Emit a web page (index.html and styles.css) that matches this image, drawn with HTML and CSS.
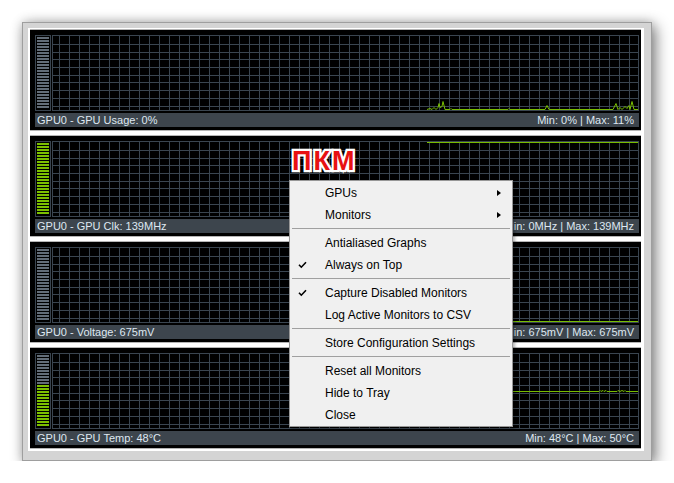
FILE: index.html
```html
<!DOCTYPE html>
<html>
<head>
<meta charset="utf-8">
<link rel="stylesheet" href="styles.css">
</head>
<body>
<div class="window">
  <div class="inner">
    <section class="panel">
      <div class="graph-row">
        <div class="meter"><div class="stripes"></div></div>
        <div class="graph">
          <svg class="plot" xmlns="http://www.w3.org/2000/svg">
            <path class="hgrid" d="M0 8.5H585M0 16.5H585M0 23.5H585M0 31.5H585M0 39.5H585M0 46.5H585M0 54.5H585M0 62.5H585M0 70.5H585"/>
            <polyline class="data" points="374,73.5 377,72.5 379,73.5 381,71.5 383,73.5 385,71.5 386,67.5 387,71.5 389,70.5 390,65.5 392,73.5 397,73.5 398,72.5 399,73.5 455,73.5 456,72.5 457,73.5 492,73.5 494,69.5 496,73.5 560,73.5 563,67.5 565,73.5 567,71.5 569,73.5 572,70.5 574,72.5 576,69.5 577,73.5 579,65.5 581,73.5 585,73.5"/>
          </svg>
        </div>
      </div>
      <div class="status"><span>GPU0 - GPU Usage: 0%</span><span>Min: 0% | Max: 11%</span></div>
    </section>
    <section class="panel">
      <div class="graph-row">
        <div class="meter"><div class="stripes"><div class="fill" style="height:72px"></div></div></div>
        <div class="graph">
          <svg class="plot" xmlns="http://www.w3.org/2000/svg">
            <path class="hgrid" d="M0 8.5H585M0 16.5H585M0 23.5H585M0 31.5H585M0 39.5H585M0 46.5H585M0 54.5H585M0 62.5H585M0 70.5H585"/>
            <polyline class="data" points="374,0.5 585,0.5"/>
          </svg>
        </div>
      </div>
      <div class="status"><span>GPU0 - GPU Clk: 139MHz</span><span>Min: 0MHz | Max: 139MHz</span></div>
    </section>
    <section class="panel">
      <div class="graph-row">
        <div class="meter"><div class="stripes"></div></div>
        <div class="graph">
          <svg class="plot" xmlns="http://www.w3.org/2000/svg">
            <path class="hgrid" d="M0 8.5H585M0 16.5H585M0 23.5H585M0 31.5H585M0 39.5H585M0 46.5H585M0 54.5H585M0 62.5H585M0 70.5H585"/>
            <polyline class="data" points="374,73.5 585,73.5"/>
          </svg>
        </div>
      </div>
      <div class="status"><span>GPU0 - Voltage: 675mV</span><span>Min: 675mV | Max: 675mV</span></div>
    </section>
    <section class="panel">
      <div class="graph-row">
        <div class="meter"><div class="stripes"><div class="fill" style="height:42px"></div></div></div>
        <div class="graph">
          <svg class="plot" xmlns="http://www.w3.org/2000/svg">
            <path class="hgrid" d="M0 8.5H585M0 16.5H585M0 23.5H585M0 31.5H585M0 39.5H585M0 46.5H585M0 54.5H585M0 62.5H585M0 70.5H585"/>
            <polyline class="data" points="374,37.5 546,37.5 547,36.5 548,37.5 550,36.5 551,37.5 553,36.5 554,37.5 564,37.5 565,36.5 567,37.5 569,36.5 571,37.5 572,36.5 573,37.5 585,37.5"/>
          </svg>
        </div>
      </div>
      <div class="status"><span>GPU0 - GPU Temp: 48°C</span><span>Min: 48°C | Max: 50°C</span></div>
    </section>
  </div>
</div>

<div class="label">ПКМ</div>

<div class="menu">
  <div class="mi"><span class="chk"></span><span>GPUs</span><span class="arrow"></span></div>
  <div class="mi"><span class="chk"></span><span>Monitors</span><span class="arrow"></span></div>
  <div class="sep"></div>
  <div class="mi"><span class="chk"></span><span>Antialiased Graphs</span></div>
  <div class="mi"><span class="chk"><svg width="9" height="8" viewBox="0 0 9 8"><path d="M1 3.8L3.3 6.2L8 1.2" fill="none" stroke="#000" stroke-width="1.6"/></svg></span><span>Always on Top</span></div>
  <div class="sep"></div>
  <div class="mi"><span class="chk"><svg width="9" height="8" viewBox="0 0 9 8"><path d="M1 3.8L3.3 6.2L8 1.2" fill="none" stroke="#000" stroke-width="1.6"/></svg></span><span>Capture Disabled Monitors</span></div>
  <div class="mi"><span class="chk"></span><span>Log Active Monitors to CSV</span></div>
  <div class="sep"></div>
  <div class="mi"><span class="chk"></span><span>Store Configuration Settings</span></div>
  <div class="sep"></div>
  <div class="mi"><span class="chk"></span><span>Reset all Monitors</span></div>
  <div class="mi"><span class="chk"></span><span>Hide to Tray</span></div>
  <div class="mi"><span class="chk"></span><span>Close</span></div>
</div>
</body>
</html>
```

FILE: styles.css
```css
* { box-sizing: border-box; }

html, body {
  margin: 0;
  padding: 0;
  background: #ffffff;
  font-family: "Liberation Sans", Arial, sans-serif;
}

.window {
  margin: 22px 0 0 22px;
  width: 630px;
  height: 439px;
  border: 1px solid #9e9e9e;
  background: #d4d4d4;
  padding: 5px 7px 8px 5px;
  box-shadow: 4px 4px 14px rgba(0, 0, 0, 0.45), 0 0 10px rgba(0, 0, 0, 0.18);
}

.inner {
  background: #ffffff;
  padding: 2px 3px 3px 2px;
  display: flex;
  flex-direction: column;
  gap: 6px;
}

.panel {
  height: 100px;
  background: #000;
  padding: 5px 2px 3px 5px;
  display: flex;
  flex-direction: column;
  gap: 2px;
  box-shadow: 0 1px 0 #b5b5b5, 0 -1px 0 #b5b5b5;
}

.graph-row {
  height: 76px;
  display: flex;
  gap: 1px;
}

.meter {
  width: 16px;
  height: 76px;
  border: 1px solid #3a4550;
  padding: 1px;
}

.stripes {
  height: 72px;
  display: flex;
  flex-direction: column;
  justify-content: flex-end;
  background: repeating-linear-gradient(to bottom, #636d78 0, #636d78 2px, transparent 2px, transparent 3px);
}

.fill {
  background: repeating-linear-gradient(to bottom, #7cc000 0, #7cc000 2px, #000 2px, #000 3px);
}

.graph {
  flex: 1;
  height: 76px;
  border: 1px solid #3a4550;
  background-color: #000;
  background-image: linear-gradient(to right, #3a4550 0, #3a4550 1px, transparent 1px);
  background-size: 10px 100%;
  background-position: 6px 0;
  position: relative;
}

.plot {
  position: absolute;
  left: 0;
  top: 0;
  width: 585px;
  height: 74px;
  display: block;
}

.hgrid {
  stroke: #3a4550;
  stroke-width: 1;
  fill: none;
  shape-rendering: crispEdges;
}

.data {
  stroke: #78bc00;
  stroke-width: 1;
  fill: none;
}

.status {
  height: 14px;
  background: #3d454d;
  color: #dfe8f1;
  font-size: 11px;
  line-height: 14px;
  padding: 0 5px 0 2px;
  display: flex;
  justify-content: space-between;
  white-space: nowrap;
}

.label {
  position: absolute;
  left: 292px;
  top: 148px;
  font-family: "Liberation Sans", Arial, sans-serif;
  font-weight: bold;
  font-size: 27px;
  line-height: 27px;
  letter-spacing: 2px;
  color: #e81212;
  -webkit-text-stroke: 4.5px #ffffff;
  paint-order: stroke fill;
}

.menu {
  position: absolute;
  left: 289px;
  top: 180px;
  width: 224px;
  border: 1px solid #979797;
  background: #f0f0f0;
  padding: 0 0 1px 0;
  box-shadow: 2px 2px 3px rgba(0, 0, 0, 0.3);
  font-size: 12px;
  color: #000;
}

.mi {
  height: 22px;
  display: flex;
  align-items: center;
  padding-left: 8px;
  padding-top: 2px;
  white-space: nowrap;
}

.chk {
  width: 27px;
  height: 20px;
  display: flex;
  align-items: center;
}

.chk svg { display: block; }

.arrow {
  margin-left: auto;
  margin-right: 11px;
  margin-top: -1px;
  width: 0;
  height: 0;
  border-left: 4px solid #000;
  border-top: 3.5px solid transparent;
  border-bottom: 3.5px solid transparent;
}

.sep {
  height: 1px;
  margin: 3px 2px 2px 2px;
  background: #a0a0a0;
}
```
